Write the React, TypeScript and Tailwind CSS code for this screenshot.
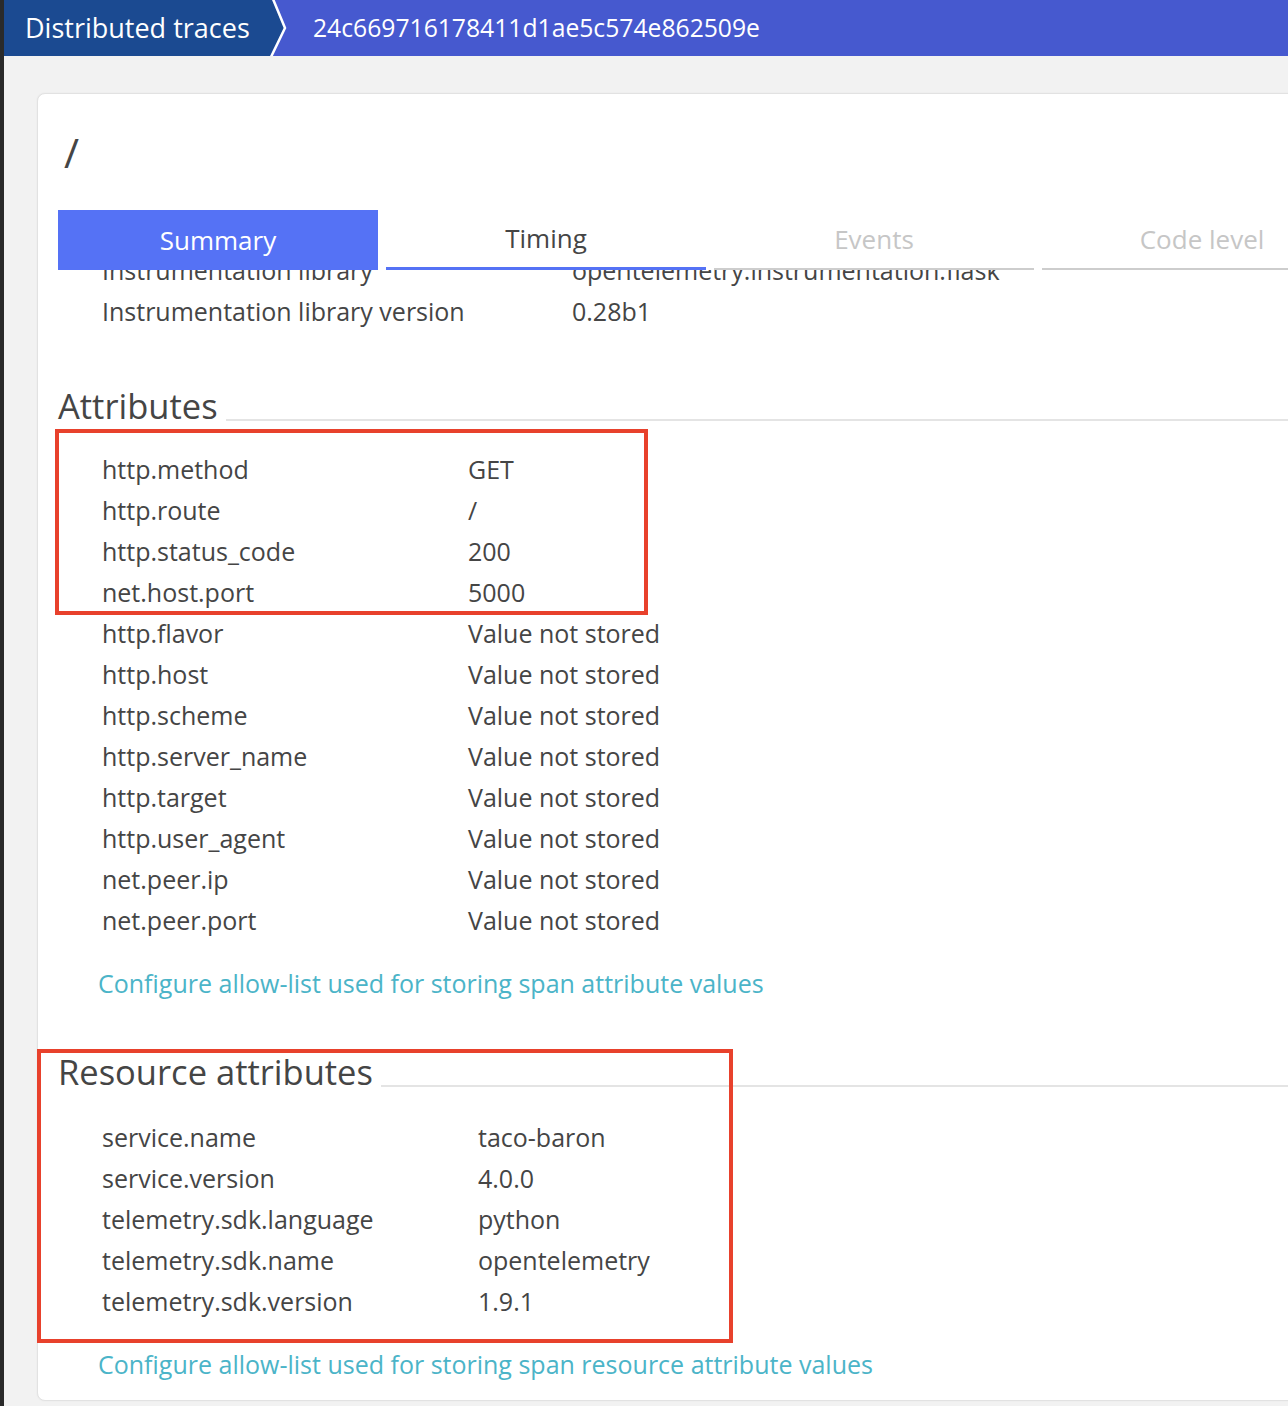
import React from "react";

const spanRows: [string, string][] = [
	["Instrumentation library", "opentelemetry.instrumentation.flask"],
	["Instrumentation library version", "0.28b1"],
];

const attributeRows: [string, string][] = [
	["http.method", "GET"],
	["http.route", "/"],
	["http.status_code", "200"],
	["net.host.port", "5000"],
	["http.flavor", "Value not stored"],
	["http.host", "Value not stored"],
	["http.scheme", "Value not stored"],
	["http.server_name", "Value not stored"],
	["http.target", "Value not stored"],
	["http.user_agent", "Value not stored"],
	["net.peer.ip", "Value not stored"],
	["net.peer.port", "Value not stored"],
];

const resourceRows: [string, string][] = [
	["service.name", "taco-baron"],
	["service.version", "4.0.0"],
	["telemetry.sdk.language", "python"],
	["telemetry.sdk.name", "opentelemetry"],
	["telemetry.sdk.version", "1.9.1"],
];

function Row({ label, value, labelWidth }: { label: string; value: string; labelWidth: string }) {
	return (
		<div className="flex h-[41px] items-center pl-[44px] text-[25px] leading-[41px] whitespace-nowrap">
			<span className={labelWidth}>{label}</span>
			<span>{value}</span>
		</div>
	);
}

function SectionHeading({ title }: { title: string }) {
	return (
		<div className="flex items-end h-[40px]">
			<h2 className="text-[34.5px] leading-[40px] font-normal whitespace-nowrap">{title}</h2>
			<div className="flex-1 ml-2 mb-[5px] border-b-2 border-[#e4e4e4]" />
		</div>
	);
}

function Tab({ label, state }: { label: string; state: "active" | "visited" | "idle" }) {
	if (state === "active") {
		return (
			<div className="w-[320px] h-[60px] shrink-0 flex items-center justify-center bg-[#5572f5] text-white text-[26px]">
				{label}
			</div>
		);
	}
	return (
		<div
			className={
				state === "visited"
					? "w-[320px] h-[60px] shrink-0 flex items-center justify-center border-b-[3px] border-[#5572f5] text-[#454545] text-[26px]"
					: "w-[320px] h-[60px] shrink-0 flex items-center justify-center border-b-2 border-[#cdcdcd] text-[#c6c6c6] text-[26px]"
			}>
			{label}
		</div>
	);
}

export default function App() {
	return (
		<div className="flex w-[1288px] min-h-[1406px] overflow-hidden bg-[#f2f2f2] text-[#454545] font-['Open_Sans',sans-serif]">
			<div className="w-1 shrink-0 bg-[#2a2a2a]" />
			<div className="flex-1 min-w-0 flex flex-col">
				{/* breadcrumb header */}
				<div className="flex h-14 shrink-0 text-white">
					<div className="w-[264px] flex items-center pl-[21px] bg-[#1b4a91] text-[27px] whitespace-nowrap">
						Distributed traces
					</div>
					<svg width="20" height="56" viewBox="0 0 20 56" className="shrink-0 bg-[#4659cf]">
						<polygon points="0,0 4,0 16,28 2,56 0,56" fill="#1b4a91" />
						<polyline points="5,-1 17,28 3,57" fill="none" stroke="#ffffff" strokeWidth="2.5" />
					</svg>
					<div className="flex-1 flex items-center pl-[25px] bg-[#4659cf] text-[24.7px] whitespace-nowrap">
						24c669716178411d1ae5c574e862509e
					</div>
				</div>

				<div className="pl-[33px] pt-[37px]">
					<div className="relative -mr-5 bg-white border border-[#e2e2e2] rounded-l-lg shadow-[0_0_2px_rgba(0,0,0,0.06)] pl-5 pt-[34px] pb-[15px]">
						<h1 className="text-[41px] leading-[48px] font-normal pl-[6px]">/</h1>

						<div className="flex gap-2 mt-[34px]">
							<Tab label="Summary" state="active" />
							<Tab label="Timing" state="visited" />
							<Tab label="Events" state="idle" />
							<Tab label="Code level" state="idle" />
						</div>

						{/* scrolled content, first row partly hidden under the tabs */}
						<div className="h-[21px] overflow-hidden">
							<div className="-mt-[20px]">
								<Row label={spanRows[0][0]} value={spanRows[0][1]} labelWidth="w-[470px]" />
							</div>
						</div>
						<Row label={spanRows[1][0]} value={spanRows[1][1]} labelWidth="w-[470px]" />

						<div className="mt-[54px]">
							<SectionHeading title="Attributes" />
						</div>
						<div className="mt-[23px]">
							{attributeRows.map(([k, v]) => (
								<Row key={k} label={k} value={v} labelWidth="w-[366px]" />
							))}
						</div>
						<div className="mt-[22px] pl-[40px] h-[41px] text-[25px] leading-[41px] text-[#4bb4c8] whitespace-nowrap">
							Configure allow-list used for storing span attribute values
						</div>

						<div className="mt-[48px]">
							<SectionHeading title="Resource attributes" />
						</div>
						<div className="mt-[25px]">
							{resourceRows.map(([k, v]) => (
								<Row key={k} label={k} value={v} labelWidth="w-[376px]" />
							))}
						</div>
						<div className="mt-[22px] pl-[40px] h-[41px] text-[25px] leading-[41px] text-[#4bb4c8] whitespace-nowrap">
							Configure allow-list used for storing span resource attribute values
						</div>

						{/* annotation boxes */}
						<div className="absolute left-[17px] top-[335px] w-[593px] h-[186px] border-4 border-[#e8412c]" />
						<div className="absolute -left-px top-[955px] w-[696px] h-[294px] border-4 border-[#e8412c]" />
					</div>
				</div>
			</div>
		</div>
	);
}
